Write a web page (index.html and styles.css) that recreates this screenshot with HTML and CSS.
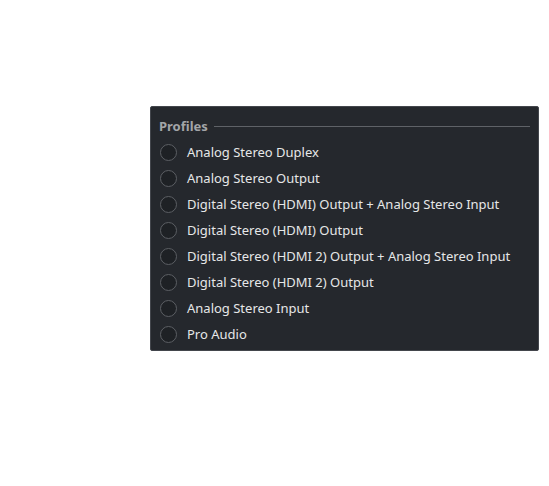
FILE: index.html
```html
<!DOCTYPE html>
<html>
<head>
<meta charset="utf-8">
<link rel="stylesheet" href="styles.css">
</head>
<body>
<div class="panel">
  <div class="header">
    <span class="title">Profiles</span>
    <span class="rule"></span>
  </div>
  <ul class="list">
    <li class="row"><span class="radio"></span><span class="label">Analog Stereo Duplex</span></li>
    <li class="row"><span class="radio"></span><span class="label">Analog Stereo Output</span></li>
    <li class="row"><span class="radio"></span><span class="label">Digital Stereo (HDMI) Output + Analog Stereo Input</span></li>
    <li class="row"><span class="radio"></span><span class="label">Digital Stereo (HDMI) Output</span></li>
    <li class="row"><span class="radio"></span><span class="label">Digital Stereo (HDMI 2) Output + Analog Stereo Input</span></li>
    <li class="row"><span class="radio"></span><span class="label">Digital Stereo (HDMI 2) Output</span></li>
    <li class="row"><span class="radio"></span><span class="label">Analog Stereo Input</span></li>
    <li class="row"><span class="radio"></span><span class="label">Pro Audio</span></li>
  </ul>
</div>
</body>
</html>
```

FILE: styles.css
```css
html, body {
  margin: 0;
  padding: 0;
  background: #ffffff;
}
body {
  font-family: "Noto Sans", "DejaVu Sans", sans-serif;
  font-size: 13px;
}
.panel {
  box-sizing: border-box;
  margin: 106px 0 0 150px;
  width: 389px;
  height: 245px;
  background: #25282d;
  border: 1px solid #43464c;
  border-radius: 2px;
  padding: 9px 8px 0 8px;
}
.header {
  display: flex;
  align-items: center;
  gap: 6px;
  height: 20px;
}
.title {
  color: #a3a5a8;
  font-weight: bold;
  line-height: 20px;
}
.rule {
  flex: 1;
  height: 1px;
  background: #5f6267;
}
.list {
  list-style: none;
  margin: 3px 0 0 0;
  padding: 0;
}
.row {
  display: flex;
  align-items: center;
  gap: 10px;
  height: 26px;
}
.radio {
  box-sizing: border-box;
  width: 17px;
  height: 17px;
  margin-left: 1px;
  border-radius: 50%;
  border: 1px solid #5c5f64;
  background: #1e2125;
  flex: none;
}
.label {
  color: #e6e7e8;
  line-height: 26px;
}
```
